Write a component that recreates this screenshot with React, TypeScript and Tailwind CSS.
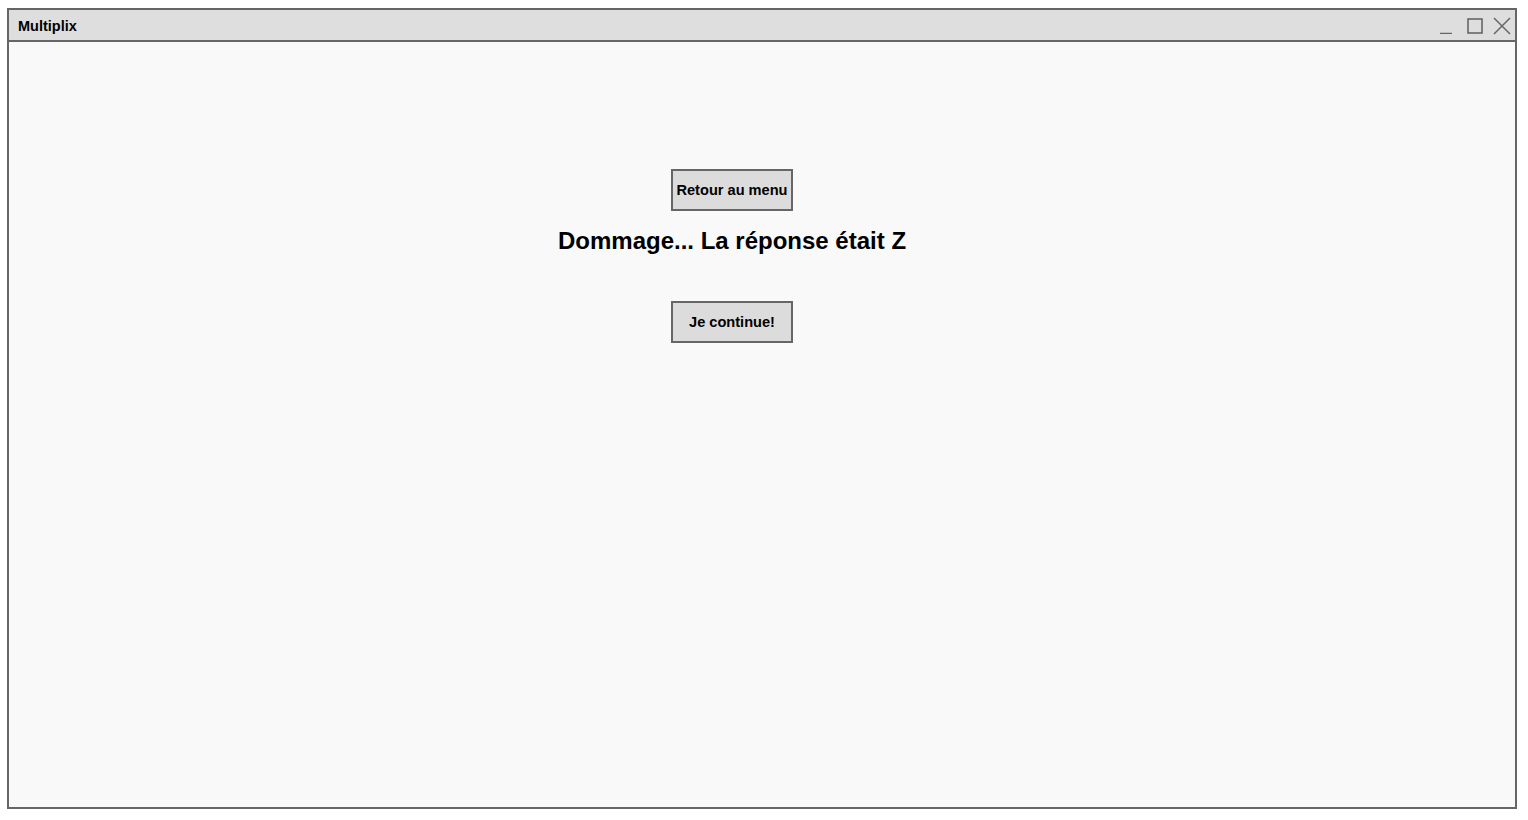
import React from 'react'

const font = { fontFamily: '"Liberation Sans", Arial, sans-serif' }

const WindowControls = () => (
  <div className="flex items-center pr-[4px] pt-[2px] text-[#666]">
    <svg width="14" height="16" viewBox="0 0 14 16">
      <line x1="1" y1="15.5" x2="13" y2="15.5" stroke="currentColor" strokeWidth="1.5" />
    </svg>
    <svg className="ml-[14px]" width="16" height="16" viewBox="0 0 16 16">
      <rect x="1" y="1" width="14" height="14" fill="none" stroke="currentColor" strokeWidth="1.6" />
    </svg>
    <svg className="ml-[10px]" width="18" height="18" viewBox="0 0 18 18">
      <path d="M1 1 L17 17 M17 1 L1 17" stroke="currentColor" strokeWidth="1.5" fill="none" />
    </svg>
  </div>
)

const GreyButton = ({ children }: { children: React.ReactNode }) => (
  <button className="h-[42px] w-[122px] whitespace-nowrap border-2 border-[#666] bg-[#dcdcdc] pt-[1px] text-[14.6px] font-semibold text-black">
    {children}
  </button>
)

export default function App() {
  return (
    <div className="h-[820px] w-[1528px] bg-white pl-[7px] pt-[8px]" style={font}>
      <div className="flex h-[801px] w-[1510px] flex-col border-2 border-[#666] bg-[#f9f9f9]">
        <div className="flex h-[32px] shrink-0 items-center justify-between border-b-2 border-[#666] bg-[#dedede] pl-[9px]">
          <span className="pt-[3px] text-[14.5px] font-bold text-black">Multiplix</span>
          <WindowControls />
        </div>
        <div className="flex-1 pl-[549px] pt-[127px]">
          <div className="flex w-[348px] flex-col items-center">
            <GreyButton>Retour au menu</GreyButton>
            <h1 className="mt-[16px] whitespace-nowrap text-[24px] leading-[28px] font-bold text-black">
              Dommage... La réponse était Z
            </h1>
            <div className="mt-[46px]">
              <GreyButton>Je continue!</GreyButton>
            </div>
          </div>
        </div>
      </div>
    </div>
  )
}
